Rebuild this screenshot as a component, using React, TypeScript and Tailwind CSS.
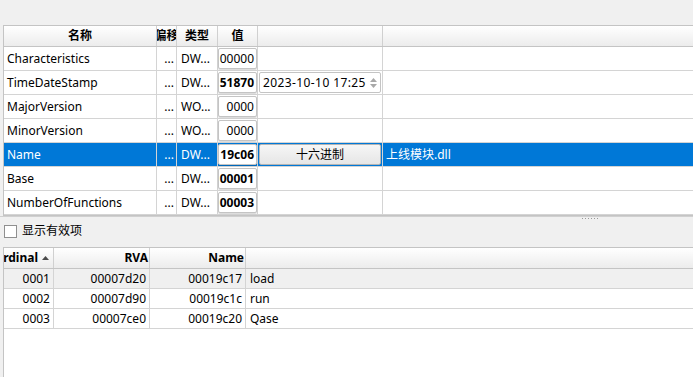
import React from "react"

const font = { fontFamily: '"Noto Sans", "Noto Sans CJK SC", sans-serif' }

type Row = { name: string; type: string; value: string; bold: boolean }

const rows: Row[] = [
  { name: "Characteristics", type: "DW...", value: "00000", bold: false },
  { name: "TimeDateStamp", type: "DW...", value: "51870", bold: true },
  { name: "MajorVersion", type: "WO...", value: "0000", bold: false },
  { name: "MinorVersion", type: "WO...", value: "0000", bold: false },
  { name: "Name", type: "DW...", value: "19c06", bold: true },
  { name: "Base", type: "DW...", value: "00001", bold: true },
  { name: "NumberOfFunctions", type: "DW...", value: "00003", bold: true },
]

const exportsList = [
  { ord: "0001", rva: "00007d20", name: "00019c17", label: "load" },
  { ord: "0002", rva: "00007d90", name: "00019c1c", label: "run" },
  { ord: "0003", rva: "00007ce0", name: "00019c20", label: "Qase" },
]

function ValueBox({ value, bold }: { value: string; bold: boolean }) {
  return (
    <div className="w-[40px] h-full py-px border-r border-[#d4d4d4] flex">
      <div className={`flex-1 flex items-center justify-end pr-[2px] overflow-hidden bg-white border border-[#c4c4c4] rounded-[2px] shadow-[0_1px_1px_rgba(0,0,0,0.15)] text-black ${bold ? "font-bold" : ""}`}>
        <span className="whitespace-nowrap">{value}</span>
      </div>
    </div>
  )
}

function Spinner() {
  return (
    <svg width="9" height="14" viewBox="0 0 9 14" className="shrink-0 ml-auto">
      <path d="M4.5 2 L8 6 L1 6 Z" fill="#a8a8a8" />
      <path d="M4.5 12 L8 8 L1 8 Z" fill="#a8a8a8" />
    </svg>
  )
}

function App() {
  return (
    <div className="w-[693px] h-[377px] bg-[#f0f0f0] overflow-hidden flex flex-col text-[12px] text-black" style={font}>
      <div className="h-[25px] shrink-0" />

      {/* property table */}
      <div className="ml-[3px] border-t border-l border-b border-[#c4c4c4] bg-white shrink-0">
        <div className="flex h-[21px] border-b border-[#c4c4c4] bg-gradient-to-b from-white to-[#ececec] font-bold">
          <div className="w-[153px] border-r border-[#d0d0d0] flex items-center justify-center">名称</div>
          <div className="w-[20px] border-r border-[#d0d0d0] flex items-center justify-center overflow-hidden whitespace-nowrap">偏移</div>
          <div className="w-[41px] border-r border-[#d0d0d0] flex items-center justify-center">类型</div>
          <div className="w-[40px] border-r border-[#d0d0d0] flex items-center justify-center">值</div>
          <div className="w-[125px] border-r border-[#d0d0d0]" />
          <div className="flex-1" />
        </div>
        {rows.map((r) => {
          const sel = r.name === "Name"
          return (
            <div key={r.name} className={`flex h-[24px] border-b border-[#d4d4d4] ${sel ? "bg-[#0078d7] text-white" : ""}`}>
              <div className="w-[153px] border-r border-[#d4d4d4] flex items-center pl-[3px] whitespace-nowrap">{r.name}</div>
              <div className="w-[20px] border-r border-[#d4d4d4] flex items-center justify-end pr-[2px]">...</div>
              <div className="w-[41px] border-r border-[#d4d4d4] flex items-center pl-[4px] whitespace-nowrap overflow-hidden">{r.type}</div>
              <ValueBox value={r.value} bold={r.bold} />
              <div className="w-[125px] h-full border-r border-[#d4d4d4] p-px flex">
                {r.name === "TimeDateStamp" && (
                  <div className="flex-1 flex items-center bg-white border border-[#c4c4c4] rounded-[2px] text-black pl-[3px] pr-[2px] overflow-hidden">
                    <span className="w-[103px] whitespace-nowrap overflow-hidden tracking-[0.4px]">2023-10-10 17:25:</span>
                    <Spinner />
                  </div>
                )}
                {sel && (
                  <div className="flex-1 flex items-center justify-center bg-gradient-to-b from-[#f6f6f6] to-[#e6e6e6] border border-[#b4b4b4] rounded-[2px] text-black">十六进制</div>
                )}
              </div>
              <div className="flex-1 flex items-center pl-[3px] whitespace-nowrap">{sel ? "上线模块.dll" : ""}</div>
            </div>
          )
        })}
      </div>

      {/* splitter + checkbox */}
      <div className="h-[31px] shrink-0 relative flex items-center pl-[4px] pb-[2px] border-t border-[#d0d0d0]">
        <div className="absolute left-[582px] top-[1px] flex gap-[2px]">
          {[0, 1, 2, 3, 4, 5].map((i) => (
            <span key={i} className="w-[1px] h-[1px] bg-[#9a9a9a]" />
          ))}
        </div>
        <div className="w-[13px] h-[13px] bg-white border border-[#8f8f8f]" />
        <span className="ml-[5px]">显示有效项</span>
      </div>

      {/* exports table */}
      <div className="flex-1 ml-[3px] border-t border-l border-[#c4c4c4] bg-white">
        <div className="flex h-[21px] border-b border-[#c4c4c4] bg-gradient-to-b from-white to-[#ececec] font-bold">
          <div className="w-[50px] border-r border-[#d0d0d0] flex items-center justify-end pr-[4px] overflow-hidden whitespace-nowrap">
            <span>Ordinal</span>
            <svg width="7" height="4" viewBox="0 0 7 4" className="ml-[4px] shrink-0">
              <path d="M3.5 0 L7 4 L0 4 Z" fill="#4a4a4a" />
            </svg>
          </div>
          <div className="w-[96px] border-r border-[#d0d0d0] flex items-center justify-end pr-px">RVA</div>
          <div className="w-[96px] border-r border-[#d0d0d0] flex items-center justify-end pr-px">Name</div>
          <div className="flex-1" />
        </div>
        {exportsList.map((e, i) => (
          <div key={e.ord} className={`flex h-[20px] border-b border-[#d4d4d4] ${i === 0 ? "bg-[#f0f0f0]" : ""}`}>
            <div className="w-[50px] border-r border-[#d4d4d4] flex items-center justify-end pr-[3px]">{e.ord}</div>
            <div className="w-[96px] border-r border-[#d4d4d4] flex items-center justify-end pr-[3px]">{e.rva}</div>
            <div className="w-[96px] border-r border-[#d4d4d4] flex items-center justify-end pr-[3px]">{e.name}</div>
            <div className="flex-1 flex items-center pl-[4px]">{e.label}</div>
          </div>
        ))}
      </div>
    </div>
  )
}

export default App
